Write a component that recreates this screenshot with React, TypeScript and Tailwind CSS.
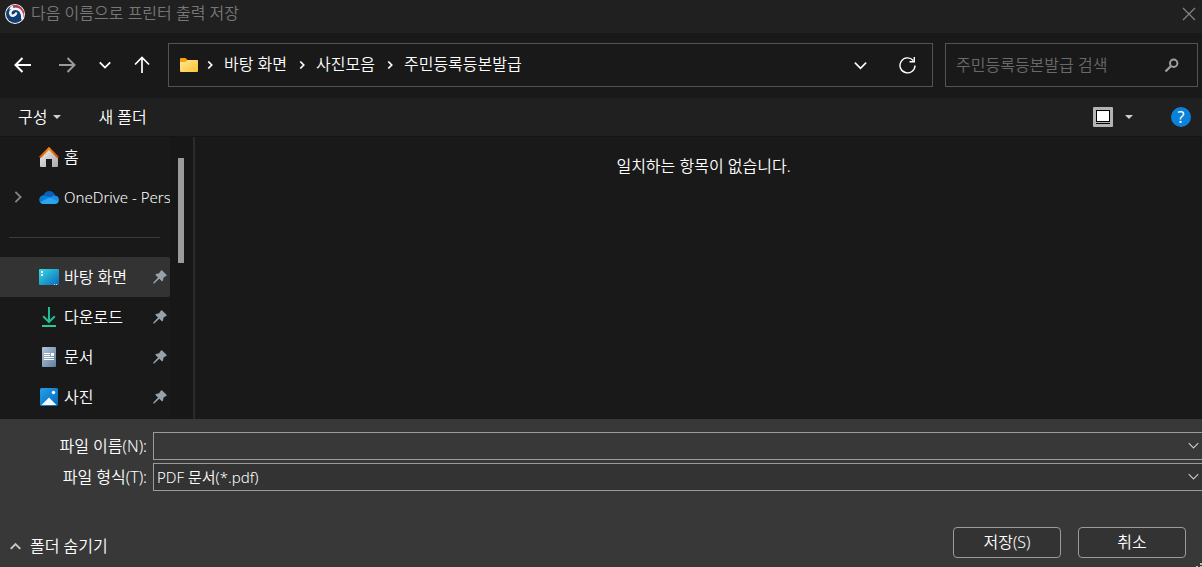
import type { JSX, ReactNode } from "react";

interface ChevronProps {
  className?: string;
  size?: number;
  weight?: number;
}

function ChevronDown({ className = "", size = 12, weight = 1.5 }: ChevronProps): JSX.Element {
  return (
    <svg className={className} width={size} height={size} viewBox="0 0 12 12" fill="none" stroke="currentColor" strokeWidth={weight} aria-hidden="true">
      <path d="M0.8 3.4 6 8.6l5.2-5.2" />
    </svg>
  );
}

function Caret(): JSX.Element {
  return (
    <svg width="8" height="4" viewBox="0 0 8 4" fill="#d0d0d0" aria-hidden="true">
      <path d="M0 0h8L4 4z" />
    </svg>
  );
}

function GovLogo(): JSX.Element {
  return (
    <svg width="20" height="20" viewBox="0 0 20 20" aria-hidden="true">
      <circle cx="10" cy="10" r="10" fill="#f4f4f6" />
      <circle cx="10" cy="10" r="9" fill="#123f73" />
      <path d="M7 1.500A9 9 0 0 1 18 14C18 9 16 5 12.500 3.600 10.500 2.900 8.500 2.900 7 3.500z" fill="#d8304a" />
      <path d="M17.400 14.500C17.800 8.500 14.500 4.500 10.200 4.700 6 5 4.200 8.500 5.800 10.700 7.400 12.700 10 11.500 11 9.500" fill="none" stroke="#f4f4f6" strokeWidth="2.600" strokeLinecap="round" />
      <path d="M4 5.500Q5 2.500 7.800 1.200L8.500 4.500z" fill="#f4f4f6" />
    </svg>
  );
}

function FolderIcon(): JSX.Element {
  return (
    <svg width="18" height="14" viewBox="0 0 18 14" aria-hidden="true">
      <defs>
        <linearGradient id="folder" x1="0" y1="0" x2="1" y2="1">
          <stop offset="0" stopColor="#ffe69a" />
          <stop offset="1" stopColor="#ffc42e" />
        </linearGradient>
      </defs>
      <path d="M0 1q0-1 1-1h4.500l2 2H17q1 0 1 1v4H0z" fill="#f5a50c" />
      <path d="M0 4h5.500L7.500 2H17q1 0 1 1v10q0 1-1 1H1q-1 0-1-1z" fill="url(#folder)" />
    </svg>
  );
}

function HomeIcon(): JSX.Element {
  return (
    <svg width="20" height="20" viewBox="0 0 20 20" aria-hidden="true">
      <defs>
        <linearGradient id="wall" x1="0" y1="0" x2="1" y2="1">
          <stop offset="0" stopColor="#f0f0f0" />
          <stop offset="1" stopColor="#a8a8a8" />
        </linearGradient>
        <linearGradient id="roof" x1="0" y1="0" x2="1" y2="0">
          <stop offset="0" stopColor="#d9540c" />
          <stop offset="0.500" stopColor="#f98a12" />
          <stop offset="1" stopColor="#d0460a" />
        </linearGradient>
      </defs>
      <path d="M1 10 10 2l9 8v9q0 1-1 1h-5v-8H7v8H2q-1 0-1-1z" fill="url(#wall)" />
      <path d="M.8 10.500 10 1.400l9.200 9.100" fill="none" stroke="url(#roof)" strokeWidth="2.200" />
    </svg>
  );
}

function CloudIcon(): JSX.Element {
  return (
    <svg width="20" height="13" viewBox="0 0 20 13" aria-hidden="true">
      <path d="M4.500 4.300C5.500 1.600 7.500 0 10.200 0c2.900 0 5 1.700 5.800 4.300L11 8z" fill="#0a5fba" />
      <path d="M4.500 13A4.400 4.400 0 0 1 4.700 4.200c1.300 0 2 .2 3.300 1L15 9z" fill="#0a7bd6" />
      <path d="M10.500 7 15 4.200c3 .1 5 1.900 5 4.400 0 1-.3 1.900-.8 2.600z" fill="#1790e2" />
      <path d="M4.500 13q-2 0-3.200-1.700L10.500 6.300l9 4.500q-1 2.200-3.500 2.200z" fill="#2aa6ee" />
    </svg>
  );
}

function DesktopIcon(): JSX.Element {
  return (
    <svg width="20" height="16" viewBox="0 0 20 16" aria-hidden="true">
      <defs>
        <linearGradient id="desk" x1="0" y1="0" x2="1" y2="1">
          <stop offset="0" stopColor="#35dbe2" />
          <stop offset="1" stopColor="#0b69bd" />
        </linearGradient>
      </defs>
      <rect width="20" height="16" rx="1" fill="url(#desk)" />
      <path d="M2 2h2v2H2zM2 5h2v2H2z" fill="#fff" />
      <path d="M15 15h1v1h-1zM17 15h1v1h-1z" fill="#c4e6fa" />
    </svg>
  );
}

function DownloadIcon(): JSX.Element {
  return (
    <svg width="14" height="20" viewBox="0 0 14 20" fill="none" strokeWidth="2" aria-hidden="true">
      <path d="M7 0v15M1.200 9.200 7 15l5.800-5.800" stroke="#1fbd97" />
      <path d="M0 19h14" stroke="#2bc98d" />
    </svg>
  );
}

function DocumentIcon(): JSX.Element {
  return (
    <svg width="14" height="20" viewBox="0 0 14 20" aria-hidden="true">
      <defs>
        <linearGradient id="doc" x1="0" y1="0" x2="1" y2="1">
          <stop offset="0" stopColor="#b3c4d8" />
          <stop offset="1" stopColor="#5f7fa0" />
        </linearGradient>
      </defs>
      <rect width="14" height="20" rx="1" fill="url(#doc)" />
      <path d="M2 6h6v1H2zM2 8h6v1H2zM9 6h3v3H9zM2 10h10v1H2zM2 12h10v1H2z" fill="#fff" />
    </svg>
  );
}

function PictureIcon(): JSX.Element {
  return (
    <svg width="18" height="18" viewBox="0 0 18 18" aria-hidden="true">
      <defs>
        <linearGradient id="pic" x1="0" y1="0" x2="1" y2="1">
          <stop offset="0" stopColor="#24a0ec" />
          <stop offset="1" stopColor="#0667b8" />
        </linearGradient>
      </defs>
      <rect width="18" height="18" rx="1.500" fill="url(#pic)" />
      <circle cx="13.500" cy="4.500" r="1.700" fill="#fff" />
      <path d="M1.500 17 9 9.500l7.500 7.500z" fill="#f2f8fd" />
    </svg>
  );
}

function PinIcon(): JSX.Element {
  return (
    <svg className="mr-[3px] shrink-0" width="14" height="14" viewBox="0 0 14 14" fill="#96a1a9" aria-hidden="true">
      <path d="M7.800.7q.6-.9 1.400-.2l4.200 4.200q.7.8-.3 1.400L10.600 7.500 9.900 10.700q-.4 1.100-1.200.4L6.300 8.800 1.200 13.400H.3v-.9L5 7.600 2.700 5.200q-.7-.8.4-1.100l3-.8z" />
    </svg>
  );
}

interface PlaceProps {
  label: string;
  icon: ReactNode;
  pinned?: boolean;
  selected?: boolean;
  expandable?: boolean;
}

function Place({ label, icon, pinned, selected, expandable }: PlaceProps): JSX.Element {
  return (
    <li>
      <button
        className={`flex h-10 w-full items-center overflow-hidden rounded-r-xs text-left whitespace-nowrap ${
          selected ? "bg-[#333333]" : ""
        }`}
      >
        <span className="flex w-9 shrink-0 justify-center text-[#858585]">
          {expandable && <ChevronDown className="-rotate-90" weight={1.800} />}
        </span>
        <span className="flex w-[26px] shrink-0 justify-center">{icon}</span>
        <span className={`ml-0.5 flex-1 overflow-hidden ${expandable ? "text-[15px]" : ""}`}>{label}</span>
        {pinned && <PinIcon />}
      </button>
    </li>
  );
}

function Crumb({ label }: { label: string }): JSX.Element {
  return (
    <li className="flex items-center">
      <ChevronDown className="mt-0.5 mr-2.5 -rotate-90" size={8} weight={2.500} />
      <button className="mr-[11px]">{label}</button>
    </li>
  );
}

const places: PlaceProps[] = [
  { label: "바탕 화면", icon: <DesktopIcon />, pinned: true, selected: true },
  { label: "다운로드", icon: <DownloadIcon />, pinned: true },
  { label: "문서", icon: <DocumentIcon />, pinned: true },
  { label: "사진", icon: <PictureIcon />, pinned: true },
];

const crumbs = ["바탕 화면", "사진모음", "주민등록등본발급"];

export default function App(): JSX.Element {
  return (
    <div className="flex h-screen flex-col overflow-hidden bg-[#191919] font-['Noto_Sans','Noto_Sans_CJK_KR',sans-serif] text-base leading-6 font-[350] text-white">
      <header className="flex h-[33px] shrink-0 items-start justify-between bg-[#202020] pr-1.5 pl-[5px]">
        <div className="flex items-start gap-1.5 text-[#777777]">
          <span className="pt-1"><GovLogo /></span>
          <h1 className="pt-px">다음 이름으로 프린터 출력 저장</h1>
        </div>
        <button className="mt-[7px] text-[#858585]" aria-label="닫기">
          <svg width="14" height="14" viewBox="0 0 14 14" stroke="currentColor" strokeWidth="1.200">
            <path d="m1 1 12 12M13 1 1 13" />
          </svg>
        </button>
      </header>

      <nav className="flex h-[65px] shrink-0 items-start gap-3 pt-2.5 pr-1">
        <div className="flex flex-1 items-center">
          <div className="flex w-[168px] shrink-0 items-center pl-3.5">
            <button className="w-11" aria-label="뒤로">
              <svg width="18" height="16" viewBox="0 0 18 16" fill="none" stroke="#fff" strokeWidth="2">
                <path d="M17 8H2M8.500 1 1.500 8l7 7" />
              </svg>
            </button>
            <button className="w-10" aria-label="앞으로">
              <svg width="18" height="16" viewBox="0 0 18 16" fill="none" stroke="#9a9a9a" strokeWidth="2">
                <path d="M1 8h15M9.500 1l7 7-7 7" />
              </svg>
            </button>
            <button className="w-9" aria-label="최근 위치">
              <ChevronDown className="ml-px" weight={1.800} />
            </button>
            <button aria-label="위로">
              <svg width="16" height="18" viewBox="0 0 16 18" fill="none" stroke="#fff" strokeWidth="1.700">
                <path d="M8 17V2M1 8.500l7-7 7 7" />
              </svg>
            </button>
          </div>
          <div className="flex h-11 flex-1 items-center border border-[#535353] pr-4 pl-[11px]">
            <span className="mr-2"><FolderIcon /></span>
            <ol className="flex flex-1 pb-0.5">
              {crumbs.map((c) => (
                <Crumb key={c} label={c} />
              ))}
            </ol>
            <button className="mr-8" aria-label="이전 위치">
              <ChevronDown weight={1.500} size={13} />
            </button>
            <button aria-label="새로 고침">
              <svg width="17" height="17" viewBox="0 0 17 17" fill="none" stroke="#fff" strokeWidth="1.400">
                <path d="M14.200 3.500A7.500 7.500 0 1 0 16 8.500M15.300 0v4.800h-4.800" />
              </svg>
            </button>
          </div>
        </div>
        <label className="flex h-11 w-[253px] items-center border border-[#535353] pr-[18px] pl-2.5">
          <input type="search" aria-label="검색" placeholder="주민등록등본발급 검색" className="min-w-0 flex-1 bg-transparent outline-none placeholder:text-[#696969]" />
          <svg width="15" height="15" viewBox="0 0 15 15" fill="none" stroke="#a0a0a0" aria-hidden="true">
            <circle cx="9.700" cy="5.300" r="3.700" strokeWidth="2" />
            <path d="M6.700 8.300 1.500 13.500" strokeWidth="2.200" />
          </svg>
        </label>
      </nav>

      <div className="flex h-[39px] shrink-0 items-center border-b border-[#151515] bg-[#202020] pr-[11px] pl-[18px]">
        <button className="flex items-center gap-1.5">
          구성 <Caret />
        </button>
        <button className="ml-[37px]">새 폴더</button>
        <button className="ml-auto flex items-center gap-3" aria-label="보기">
          <svg width="20" height="20" viewBox="0 0 20 20" aria-hidden="true">
            <rect width="20" height="20" rx="1" fill="#b4b4b4" />
            <path d="M3 3h14v12H3zM3 16h14v1H3z" fill="#000" />
            <path d="M4 4h12v10H4z" fill="#fff" />
          </svg>
          <Caret />
        </button>
        <button className="ml-[38px] flex size-5 items-center justify-center rounded-full bg-[#0b82da] font-normal" aria-label="도움말">
          ?
        </button>
      </div>

      <main className="flex min-h-0 flex-1">
        <aside className="flex w-[193px] shrink-0 overflow-hidden">
          <ul className="w-[170px] shrink-0">
            <Place label="홈" icon={<HomeIcon />} />
            <Place label="OneDrive - Personal" icon={<CloudIcon />} expandable />
            <li className="flex h-10 items-center pr-2.5 pl-[9px]">
              <hr className="w-full border-[#3a3a3a]" />
            </li>
            {places.map((p) => (
              <Place key={p.label} {...p} />
            ))}
          </ul>
          <div className="flex-1 bg-[#171717] pt-[21px] pl-2">
            <div className="h-[105px] w-1.5 bg-[#9b9b9b]" />
          </div>
        </aside>
        <section className="flex-1 border-l-2 border-[#2b2b2b] pt-[17px] pl-2.5 text-center">
          <p>일치하는 항목이 없습니다.</p>
        </section>
      </main>

      <form className="relative flex shrink-0 flex-col bg-[#383838] pt-[13px] pb-[9px]" onSubmit={(e) => e.preventDefault()}>
        <div className="grid grid-cols-[147px_1fr] items-center gap-x-1.5 gap-y-[3px]">
          <label htmlFor="name" className="text-right">파일 이름(N):</label>
          <div className="relative">
            <input id="name" className="block h-7 w-full border border-r-0 border-[#9b9b9b] bg-[#383838] px-[3px] outline-none" />
            <ChevronDown className="pointer-events-none absolute top-2 right-[3px] text-[#c8c8c8]" size={11} weight={1.200} />
          </div>
          <label htmlFor="type" className="text-right">파일 형식(T):</label>
          <div className="relative">
            <select id="type" className="block h-7 w-full appearance-none border border-r-0 border-[#9b9b9b] bg-[#333333] px-[3px] text-[15px] outline-none">
              <option>PDF 문서(*.pdf)</option>
            </select>
            <ChevronDown className="pointer-events-none absolute top-2 right-[3px] text-[#c8c8c8]" size={11} weight={1.200} />
          </div>
        </div>
        <div className="mt-9 flex items-start justify-between pr-4 pl-2.5">
          <button type="button" className="mt-[7px] flex items-center gap-[9px]">
            <ChevronDown className="rotate-180 text-[#c8c8c8]" size={11} weight={2.200} />
            폴더 숨기기
          </button>
          <div className="flex gap-[17px]">
            <button type="submit" className="h-[31px] w-[108px] rounded-sm border border-[#9b9b9b] bg-[#333333] pb-0.5">저장(S)</button>
            <button type="button" className="h-[31px] w-[108px] rounded-sm border border-[#9b9b9b] bg-[#333333] pb-0.5">취소</button>
          </div>
        </div>
        <svg className="absolute right-0 bottom-0" width="6" height="4" viewBox="0 0 6 4" fill="#bdbdbd" aria-hidden="true">
          <path d="M4 0h2v2H4zM0 3h2v1H0zM4 3h2v1H4z" />
        </svg>
      </form>
    </div>
  );
}
